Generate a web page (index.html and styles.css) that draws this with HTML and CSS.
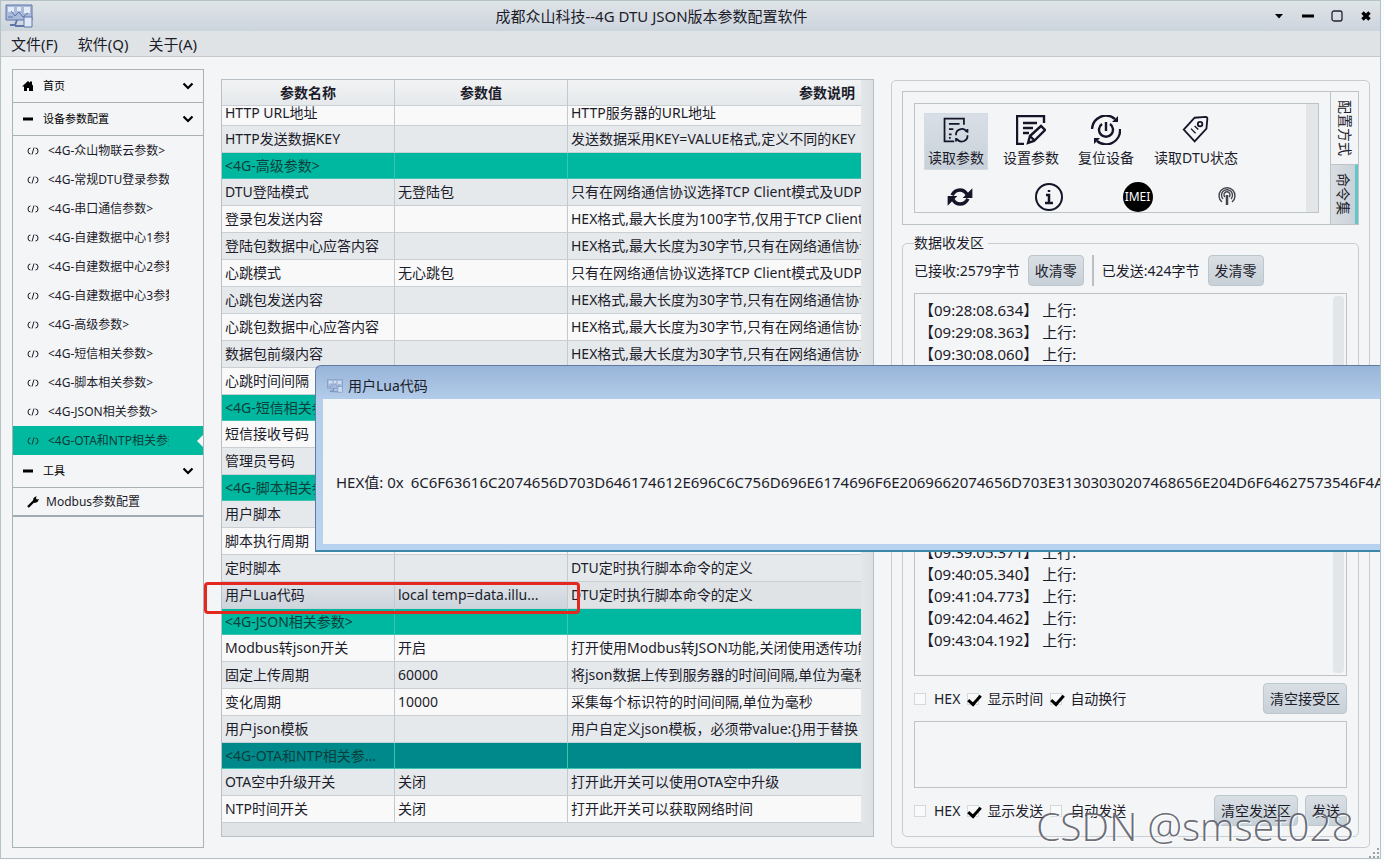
FILE: index.html
```html
<!DOCTYPE html>
<html lang="zh-CN">
<head>
  <meta charset="UTF-8">
  <meta name="viewport" content="width=device-width, initial-scale=1.0">
  <title>成都众山科技--4G DTU JSON版本参数配置软件</title>
  <link rel="stylesheet" href="styles.css">
</head>
<body>
  <!-- shared icons -->
  <svg class="defs" width="0" height="0">
    <symbol id="i-code" viewBox="0 0 12 10"><path d="M3.500 2Q1 2 1 5t2.500 3M8.500 2Q11 2 11 5t-2.500 3M7 1.500 5 8.500" fill="none" stroke="currentColor"/></symbol>
    <symbol id="i-down" viewBox="0 0 12 12"><path d="m1.500 3.500 4.500 4.500 4.500-4.500" fill="none" stroke="currentColor" stroke-width="2.200"/></symbol>
    <symbol id="i-minus" viewBox="0 0 12 12"><path d="M1 4.500h10v3H1z" fill="currentColor"/></symbol>
    <symbol id="i-app" viewBox="0 0 28 24">
      <path d="M1 1h26v15H1z" fill="#a9badb" stroke="#5f76a8"/>
      <path d="M3 3h6v5H3zM12 3h4v4h-4zM19 3h6v6h-6z" fill="#e4ebf7"/>
      <path d="M3 13h5M6 7l4 5 4-4 4 5 5-4" fill="none" stroke="#5f76a8"/>
      <path d="M12 16l-2 5H5M10 22h9" fill="none" stroke="#5f76a8" stroke-width="2"/>
      <path d="M19 13h8v10h-8z" fill="#dfe8f6" stroke="#5f76a8"/>
    </symbol>
  </svg>

  <div class="window">
    <header class="titlebar">
      <svg class="app-icon"><use href="#i-app"/></svg>
      <h1>成都众山科技--4G DTU JSON版本参数配置软件</h1>
      <div class="win-buttons">
        <button aria-label="菜单"><svg viewBox="0 0 12 12"><path d="M2 4h8L6 8.500z"/></svg></button>
        <button aria-label="最小化"><svg viewBox="0 0 12 12"><path d="M0 4.500h12v3H0z"/></svg></button>
        <button aria-label="最大化"><svg viewBox="0 0 12 12"><rect x="1" y="1" width="10" height="10" rx="2" fill="none" stroke="#223" stroke-width="1.300"/></svg></button>
        <button aria-label="关闭"><svg viewBox="0 0 12 12"><path d="m2.500 2.500 7 7m0-7-7 7" stroke="#000" stroke-width="3.400"/></svg></button>
      </div>
    </header>

    <nav class="menubar">
      <button>文件(F)</button>
      <button>软件(Q)</button>
      <button>关于(A)</button>
    </nav>

    <main class="content">
      <nav class="sidebar">
        <button class="group"><svg viewBox="0 0 12 12"><path d="M0 6.500 6 1l2 1.800V1.500h2v3l1 1V11H7V8H5v3H2V6.500z"/></svg><span>首页</span><svg class="arrow"><use href="#i-down"/></svg></button>
        <button class="group"><svg><use href="#i-minus"/></svg><span>设备参数配置</span><svg class="arrow"><use href="#i-down"/></svg></button>
        <div class="links">
          <a href="#"><svg><use href="#i-code"/></svg><span>&lt;4G-众山物联云参数&gt;</span></a>
          <a href="#"><svg><use href="#i-code"/></svg><span>&lt;4G-常规DTU登录参数&gt;</span></a>
          <a href="#"><svg><use href="#i-code"/></svg><span>&lt;4G-串口通信参数&gt;</span></a>
          <a href="#"><svg><use href="#i-code"/></svg><span>&lt;4G-自建数据中心1参数&gt;</span></a>
          <a href="#"><svg><use href="#i-code"/></svg><span>&lt;4G-自建数据中心2参数&gt;</span></a>
          <a href="#"><svg><use href="#i-code"/></svg><span>&lt;4G-自建数据中心3参数&gt;</span></a>
          <a href="#"><svg><use href="#i-code"/></svg><span>&lt;4G-高级参数&gt;</span></a>
          <a href="#"><svg><use href="#i-code"/></svg><span>&lt;4G-短信相关参数&gt;</span></a>
          <a href="#"><svg><use href="#i-code"/></svg><span>&lt;4G-脚本相关参数&gt;</span></a>
          <a href="#"><svg><use href="#i-code"/></svg><span>&lt;4G-JSON相关参数&gt;</span></a>
          <a href="#" class="active"><svg><use href="#i-code"/></svg><span>&lt;4G-OTA和NTP相关参数&gt;</span></a>
        </div>
        <button class="group"><svg><use href="#i-minus"/></svg><span>工具</span><svg class="arrow"><use href="#i-down"/></svg></button>
        <a href="#" class="tool"><svg viewBox="0 0 12 12"><path d="M1 11 7 5" stroke="#000" stroke-width="2.400"/><path d="M6 5 6.500 2 9.500 0 9 2.500l1 1L12 3l-1.500 3L7.500 7z"/></svg><span>Modbus参数配置</span></a>
      </nav>

      <section class="params">
        <div class="table-wrap">
          <table>
            <thead>
              <tr><th>参数名称</th><th>参数值</th><th>参数说明</th></tr>
            </thead>
            <tbody>
              <tr class="first"><td>HTTP URL地址</td><td></td><td>HTTP服务器的URL地址</td></tr>
              <tr><td>HTTP发送数据KEY</td><td></td><td>发送数据采用KEY=VALUE格式,定义不同的KEY</td></tr>
              <tr class="section"><td>&lt;4G-高级参数&gt;</td><td></td><td></td></tr>
              <tr><td>DTU登陆模式</td><td>无登陆包</td><td>只有在网络通信协议选择TCP Client模式及UDP</td></tr>
              <tr><td>登录包发送内容</td><td></td><td>HEX格式,最大长度为100字节,仅用于TCP Client</td></tr>
              <tr><td>登陆包数据中心应答内容</td><td></td><td>HEX格式,最大长度为30字节,只有在网络通信协议</td></tr>
              <tr><td>心跳模式</td><td>无心跳包</td><td>只有在网络通信协议选择TCP Client模式及UDP</td></tr>
              <tr><td>心跳包发送内容</td><td></td><td>HEX格式,最大长度为30字节,只有在网络通信协议</td></tr>
              <tr><td>心跳包数据中心应答内容</td><td></td><td>HEX格式,最大长度为30字节,只有在网络通信协议</td></tr>
              <tr><td>数据包前缀内容</td><td></td><td>HEX格式,最大长度为30字节,只有在网络通信协议</td></tr>
              <tr><td>心跳时间间隔</td><td></td><td></td></tr>
              <tr class="section"><td>&lt;4G-短信相关参数&gt;</td><td></td><td></td></tr>
              <tr><td>短信接收号码</td><td></td><td></td></tr>
              <tr><td>管理员号码</td><td></td><td></td></tr>
              <tr class="section"><td>&lt;4G-脚本相关参数&gt;</td><td></td><td></td></tr>
              <tr><td>用户脚本</td><td></td><td></td></tr>
              <tr><td>脚本执行周期</td><td></td><td></td></tr>
              <tr><td>定时脚本</td><td></td><td>DTU定时执行脚本命令的定义</td></tr>
              <tr class="selected"><td>用户Lua代码</td><td>local temp=data.illu...</td><td>DTU定时执行脚本命令的定义</td></tr>
              <tr class="section"><td>&lt;4G-JSON相关参数&gt;</td><td></td><td></td></tr>
              <tr><td>Modbus转json开关</td><td>开启</td><td>打开使用Modbus转JSON功能,关闭使用透传功能</td></tr>
              <tr><td>固定上传周期</td><td>60000</td><td>将json数据上传到服务器的时间间隔,单位为毫秒</td></tr>
              <tr><td>变化周期</td><td>10000</td><td>采集每个标识符的时间间隔,单位为毫秒</td></tr>
              <tr><td>用户json模板</td><td></td><td>用户自定义json模板，必须带value:{}用于替换</td></tr>
              <tr class="section current"><td>&lt;4G-OTA和NTP相关参数&gt;</td><td></td><td></td></tr>
              <tr><td>OTA空中升级开关</td><td>关闭</td><td>打开此开关可以使用OTA空中升级</td></tr>
              <tr><td>NTP时间开关</td><td>关闭</td><td>打开此开关可以获取网络时间</td></tr>
            </tbody>
          </table>
          <div class="vbar"></div>
        </div>
        <div class="hbar"></div>
      </section>

      <aside class="panel">
        <div class="commands">
          <div class="tools">
            <div class="tool-list">
              <div class="tool-row">
                <button class="on">
                  <svg viewBox="-1 -1 34 34"><path d="M25 10V3H3v26h11M8 9h12M8 15h5M8 21h3M8 25h2"/><path d="M16 22a6.500 6.500 0 0 1 12-4m1 4a6.500 6.500 0 0 1-12 4M29 15v4M16 29v-4"/></svg>
                  <span>读取参数</span>
                </button>
                <button>
                  <svg viewBox="0 0 30 30" class="bold"><path d="M28 8V1H1v28h7M7 8h14M7 13h10M7 18h6"/><path d="m12 28 2-7L25 11l4 4-11 11zM14 21l4 4"/></svg>
                  <span>设置参数</span>
                </button>
                <button>
                  <svg viewBox="0 0 30 30" class="bold"><path d="M1 14A14 14 0 0 1 24 4M29 14A14 14 0 0 1 6 26M15 7v9M11 9a7 7 0 1 0 8 0"/><path d="m27 1v6h-6zM3 29v-6h6z" class="solid"/></svg>
                  <span>复位设备</span>
                </button>
                <button class="wide">
                  <svg viewBox="-1 -1 33 33"><path d="m2 15 12-13 12-1q2 0 2 2l-1 11-13 14z"/><circle cx="20" cy="9" r="2.500"/><path d="m10 14 5 5M14 11l4 4" stroke-width="1.500"/></svg>
                  <span>读取DTU状态</span>
                </button>
              </div>
              <div class="icon-row">
                <button aria-label="刷新"><svg viewBox="-2 -2 34 34"><path d="M6 13Q9 7 15 7q5 0 8 5M24 17q-3 6-9 6-5 0-8-5" stroke-width="4"/><path d="M29 5v11H18zM1 25V14h11z" class="solid"/></svg></button>
                <button aria-label="信息"><svg viewBox="0 0 30 30"><circle cx="15" cy="15" r="13"/><path d="M12 13h3v8m-4 0h8M15 8v2" stroke-width="2.500"/></svg></button>
                <button class="imei">IMEI</button>
                <button aria-label="信号"><svg viewBox="0 0 30 30" class="thin"><path d="M10 20a8 8 0 1 1 10 0M11 17a5.500 5.500 0 1 1 8 0M13 15a3 3 0 1 1 4 0"/><path d="M15 13v10" stroke-width="2.500"/></svg></button>
              </div>
            </div>
            <div class="tools-bar"></div>
          </div>
          <div class="tabs">
            <button>配置方式</button>
            <button class="on">命令集</button>
          </div>
        </div>

        <fieldset class="data">
          <legend>数据收发区</legend>
          <div class="row counters">
            <span>已接收:2579字节</span>
            <button class="btn">收清零</button>
            <i class="sep"></i>
            <span>已发送:424字节</span>
            <button class="btn">发清零</button>
          </div>
          <div class="log">
            <textarea readonly aria-label="接收区">【09:28:08.634】 上行:
【09:29:08.363】 上行:
【09:30:08.060】 上行:
【09:31:07.782】 上行:
【09:32:07.491】 上行:
【09:33:07.205】 上行:
【09:34:06.918】 上行:
【09:35:06.640】 上行:
【09:36:06.352】 上行:
【09:37:06.027】 上行:
【09:38:05.716】 上行:
【09:39:05.371】 上行:
【09:40:05.340】 上行:
【09:41:04.773】 上行:
【09:42:04.462】 上行:
【09:43:04.192】 上行:</textarea>
            <div class="log-bar"></div>
          </div>
          <div class="row options">
            <label><input type="checkbox">HEX</label>
            <label><input type="checkbox" checked>显示时间</label>
            <label><input type="checkbox" checked>自动换行</label>
            <button class="btn">清空接受区</button>
          </div>
          <textarea class="send" aria-label="发送区"></textarea>
          <div class="row options">
            <label><input type="checkbox">HEX</label>
            <label><input type="checkbox" checked>显示发送</label>
            <label><input type="checkbox">自动发送</label>
            <button class="btn">清空发送区</button>
            <button class="btn">发送</button>
          </div>
        </fieldset>
      </aside>
    </main>

    <div class="mark"></div>

    <div class="dialog" role="dialog" aria-label="用户Lua代码">
      <div class="dialog-title"><svg><use href="#i-app"/></svg><span>用户Lua代码</span></div>
      <div class="dialog-body">
        <span>HEX值: 0x</span>
        <span>6C6F63616C2074656D703D646174612E696C6C756D696E6174696F6E2069662074656D703E31303030207468656E204D6F64627573546F4A</span>
      </div>
    </div>

    <svg class="grip" viewBox="0 0 12 12"><path d="M10 2v2M10 6v2M10 10v2M6 6v2M6 10v2M2 10v2" stroke="#9aa3aa" stroke-width="2"/></svg>
    <div class="watermark">CSDN @smset028</div>
  </div>
</body>
</html>
```

FILE: styles.css
```css
* {
  box-sizing: border-box;
}
body {
  margin: 0;
  padding-right: 3px;
  background: #fafbfc;
  color: #1c1c2a;
  font-family: "Noto Sans", "Noto Sans CJK SC", sans-serif;
  font-size: 14px;
  line-height: 20px;
}
button, input, textarea {
  margin: 0;
  padding: 0;
  border: none;
  background: none;
  color: inherit;
  font: inherit;
}
a {
  color: inherit;
  text-decoration: none;
}
.defs {
  position: absolute;
}
.window {
  position: relative;
  display: flex;
  flex-direction: column;
  min-height: 859px;
  border: 1px solid #b4c2c4;
  background: #f4f5f7;
  overflow: hidden;
}

/* title bar and menu */
.titlebar {
  display: flex;
  align-items: center;
  height: 30px;
  padding: 0 8px 0 3px;
  background: linear-gradient(#dfe4e8, #ccd4dc);
}
.app-icon {
  width: 30px;
  height: 24px;
}
.titlebar h1 {
  flex: 1;
  margin: 0;
  padding-left: 6px;
  padding-right: 10px;
  font-size: 15px;
  font-weight: normal;
  text-align: center;
}
.win-buttons {
  display: flex;
  gap: 17px;
}
.win-buttons button {
  width: 12px;
  height: 12px;
}
.win-buttons svg {
  display: block;
  width: 12px;
  height: 12px;
}
.menubar {
  display: flex;
  gap: 20px;
  height: 26px;
  padding-left: 10px;
  border-bottom: 1px solid #c3c9cd;
  background: #dfe3e6;
  font-size: 15px;
}

.content {
  flex: 1;
  display: flex;
  gap: 17px;
  padding: 12px 10px 10px 11px;
}

/* sidebar */
.sidebar {
  width: 192px;
  border: 1px solid #aab2b6;
  font-size: 12px;
}
.sidebar svg {
  flex: none;
  width: 12px;
  height: 12px;
}
.group {
  display: flex;
  align-items: center;
  gap: 9px;
  width: 100%;
  height: 33px;
  padding: 0 9px;
  border-bottom: 1px solid #aab2b6;
  color: #000;
  font-size: 11px;
}
.group .arrow {
  margin-left: auto;
}
.links a {
  position: relative;
  display: flex;
  align-items: center;
  gap: 9px;
  height: 29px;
  padding: 0 34px 0 14px;
}
.links span {
  overflow: hidden;
  white-space: nowrap;
}
.links .active {
  background: #00b99f;
  color: #0d3a38;
}
.links .active::after {
  content: "";
  position: absolute;
  right: 0;
  top: 9px;
  border: 6px solid transparent;
  border-left-width: 0;
  border-right-color: #f4f5f7;
}
.tool {
  display: flex;
  align-items: center;
  gap: 7px;
  height: 29px;
  padding-left: 14px;
  border-bottom: 2px solid #a3abb0;
}

/* parameter table */
.params {
  flex: 1;
  min-width: 0;
  align-self: flex-start;
  margin-top: 10px;
  border: 1px solid #b9c0c5;
  background: #eceef0;
}
.table-wrap {
  display: flex;
}
table {
  flex: 1;
  width: 100%;
  table-layout: fixed;
  border-spacing: 0;
}
th, td {
  padding: 0 3px;
  border-right: 1px solid #c3cacf;
  border-bottom: 1px solid #c9cfd3;
  overflow: hidden;
  white-space: nowrap;
  text-align: left;
  line-height: 26px;
}
th {
  width: 173px;
  background: linear-gradient(#f1f3f4, #e6e9ec);
  line-height: 25px;
  text-align: center;
}
th:last-child {
  width: auto;
  padding-right: 6px;
  text-align: right;
}
th:last-child, td:last-child {
  border-right: none;
}
td:first-child {
  padding-right: 10px;
  text-overflow: ellipsis;
}
tbody tr {
  background: #f9f9fa;
}
tbody tr:nth-child(even) {
  background: #e6e9ec;
}
tbody .first td {
  padding-bottom: 5px;
  line-height: 14px;
}
tbody tr.section {
  background: #00b79f;
  color: #0c3f3b;
}
tbody .section td {
  border-color: #3cc4b2;
  line-height: 25px;
}
tbody tr.current {
  background: #00898b;
}
tbody tr.selected {
  background: linear-gradient(#dfe3e8, #cdd4dc);
}
tbody .selected td:last-child {
  background: #dfe3e6;
}
.vbar {
  width: 12px;
  background: linear-gradient(90deg, #e4e7ea, #dbe0e3);
}
.hbar {
  height: 13px;
  background: #dfe3e6;
}

/* right panel */
.panel {
  display: flex;
  flex-direction: column;
  width: 479px;
  margin-top: 11px;
  padding: 10px;
  border: 1px solid #c6ccd0;
  border-radius: 5px;
}
.commands {
  display: flex;
  height: 134px;
  border: 1px solid #bcc4c8;
}
.tools {
  flex: 1;
  display: flex;
  margin: 11px;
  border: 1px solid #bcc4c8;
}
.tool-list {
  flex: 1;
}
.tools-bar {
  width: 12px;
  background: #e2e6e9;
}
.tool-row {
  display: flex;
  gap: 11px;
  padding: 9px 9px 0;
}
.tool-row button {
  display: flex;
  flex-direction: column;
  align-items: center;
  gap: 3px;
  width: 64px;
  height: 57px;
  padding-top: 2px;
  white-space: nowrap;
}
.tool-row .wide {
  width: 94px;
}
.tool-row .on {
  border: 1px solid #d4dbe2;
  padding-top: 1px;
  background: linear-gradient(#d9dfe6, #c8d1da);
}
.tools svg {
  display: block;
  width: 30px;
  height: 30px;
  fill: none;
  stroke: #15152a;
  stroke-width: 2;
}
.tools .bold {
  stroke-width: 2.4;
}
.tools .thin {
  stroke: #44444f;
  stroke-width: 1.4;
}
.tools .solid {
  fill: #15152a;
  stroke: none;
}
.icon-row {
  display: grid;
  grid-template-columns: repeat(4, 89px);
  padding-top: 12px;
}
.icon-row button {
  justify-self: center;
}
.icon-row .imei {
  width: 30px;
  height: 30px;
  border-radius: 50%;
  background: #000;
  color: #fff;
  font-size: 12px;
  line-height: 30px;
}
.tabs {
  display: flex;
  flex-direction: column;
  width: 28px;
  border-left: 1px solid #bcc4c8;
}
.tabs button {
  flex: 73;
  writing-mode: vertical-rl;
  text-orientation: sideways;
}
.tabs .on {
  flex: 60;
  border-top: 1px solid #bcc4c8;
  border-right: 3px solid #63c5c5;
  background: linear-gradient(90deg, #d9dee3, #c9d1d8);
}
.data {
  flex: 1;
  display: flex;
  flex-direction: column;
  min-width: 0;
  margin: 8px 0 0;
  padding: 2px 11px 10px;
  border: 1px solid #c6ccd0;
  border-radius: 5px;
}
.data legend {
  padding: 0 4px 0 0;
}
.row {
  display: flex;
  align-items: center;
}
.counters {
  gap: 8px;
}
.btn {
  height: 31px;
  padding: 0 6px;
  border: 1px solid #bcc6cd;
  border-radius: 4px;
  background: linear-gradient(#d9dfe4, #c8d0d8);
}
.sep {
  width: 2px;
  height: 31px;
  background: #b9bfc4;
}
.log {
  flex: 1;
  display: flex;
  margin-top: 7px;
  padding: 2px;
  border: 1px solid #bcc4c8;
}
.log textarea {
  flex: 1;
  padding: 3px 2px;
  resize: none;
  overflow: hidden;
  font-size: 15px;
  line-height: 22px;
}
.log-bar {
  width: 11px;
  border-radius: 4px;
  background: #e2e6e9;
}
.options {
  gap: 7px;
  margin: 7px 0;
}
.options label {
  display: flex;
  align-items: center;
  gap: 8px;
}
.options input {
  appearance: none;
  width: 12px;
  height: 12px;
  border: 1px solid #d3d8dc;
  background: #f9fafa;
}
.options input:checked::before {
  content: "";
  display: block;
  width: 10px;
  height: 5px;
  margin-top: 1px;
  border-left: 3px solid #000;
  border-bottom: 3px solid #000;
  transform: rotate(-48deg);
}
.options label + .btn {
  margin-left: auto;
}
.send {
  height: 67px;
  border: 1px solid #bcc4c8;
  resize: none;
}
.send + .options {
  margin-bottom: 0;
}

/* things lying over the window */
.mark {
  position: absolute;
  left: 203px;
  top: 581px;
  width: 376px;
  height: 32px;
  border: 3px solid #e5281f;
  border-radius: 4px;
}
.dialog {
  position: absolute;
  left: 314px;
  right: 0;
  top: 364px;
  height: 187px;
  padding: 0 0 6px 7px;
  border: 1px solid #5f7ba0;
  border-right: none;
  border-bottom: 2px solid #3c86a8;
  border-top-left-radius: 6px;
  background: linear-gradient(#98b4d8, #b3cdea 34px, #b7d3f0);
}
.dialog-title {
  display: flex;
  align-items: center;
  gap: 5px;
  height: 33px;
  padding: 6px 0 0 4px;
}
.dialog-title svg {
  width: 16px;
  height: 14px;
  opacity: 0.7;
}
.dialog-body {
  display: flex;
  align-items: center;
  gap: 7px;
  height: 145px;
  padding: 20px 0 0 13px;
  background: #f4f5f7;
  overflow: hidden;
  white-space: nowrap;
  font-size: 15px;
}
.grip {
  position: absolute;
  right: 0;
  bottom: 0;
  width: 12px;
  height: 12px;
}
.watermark {
  position: absolute;
  right: 26px;
  bottom: 10px;
  color: rgba(70, 72, 84, 0.8);
  font-family: "Open Sans", sans-serif;
  font-size: 39px;
  font-weight: 300;
  line-height: 44px;
  text-shadow: 1px 1px 1px #fff;
}
```
